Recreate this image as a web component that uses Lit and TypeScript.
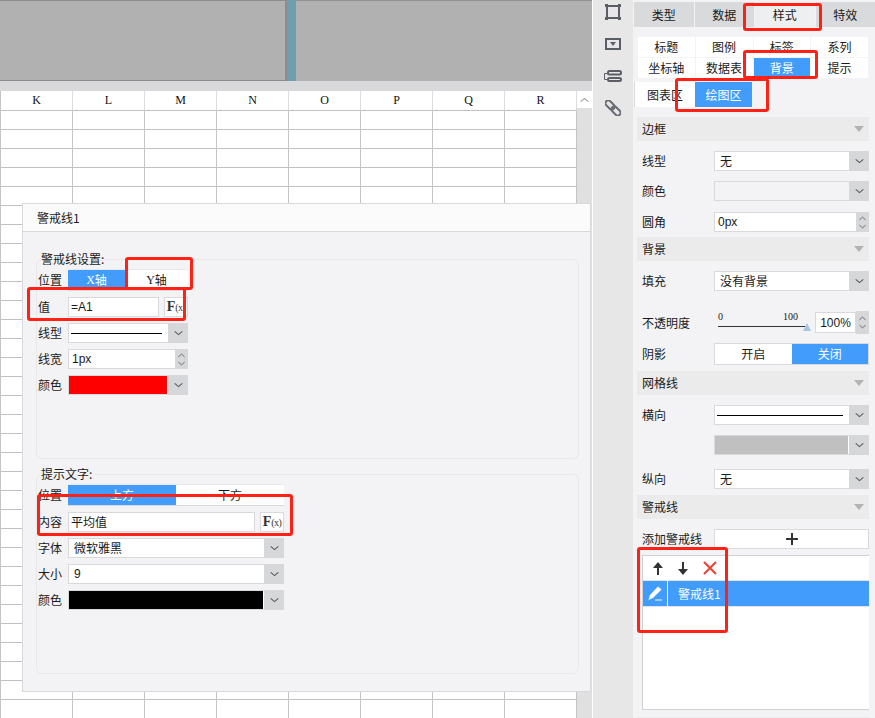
import { LitElement, html, css, svg } from "lit";
import { customElement } from "lit/decorators.js";

const chevDown = svg`<path d="M2 1 L6.5 5 L11 1" fill="none" stroke="#55585c" stroke-width="1.2"/>`;
const chevUp = svg`<path d="M2 5 L6.5 1 L11 5" fill="none" stroke="#55585c" stroke-width="1.2"/>`;
const COLS = ["K", "L", "M", "N", "O", "P", "Q", "R"];

@customElement("app-root")
export class AppRoot extends LitElement {
  static styles = css`
    :host { display: block; position: relative; width: 875px; height: 718px; overflow: hidden; background: #fff;
      font: 12px/16px "Noto Sans CJK SC", "Liberation Sans", sans-serif; color: #1a1a1a; }
    * { box-sizing: border-box; }
    .app { display: flex; height: 718px; }
    .left { position: relative; width: 592px; flex: none; display: flex; flex-direction: column; overflow: hidden; }
    .top { display: flex; height: 81px; flex: none; background: #b1b1b1; }
    .tbox1 { width: 287px; border: 1px solid #8c8c8c; border-left: 0; border-right-width: 2px; }
    .teal { width: 9px; background: #6d9fad; }
    .tbox2 { flex: 1; border-top: 1px solid #929292; }
    .band { height: 10px; flex: none; background: #d9d9db; }
    .work { display: flex; flex: 1; min-height: 0; }
    .sheet { width: 577px; flex: none; border-left: 1px solid #c4c4c4; display: grid; grid-template-columns: repeat(8, 72px); grid-auto-rows: 19px; align-content: start; overflow: hidden; }
    .ch { height: 20px; margin-bottom: -1px; display: flex; align-items: center; justify-content: center; border-right: 1px solid #dcdce0; border-bottom: 1px solid #c0c0c0; font: 400 12px "Liberation Serif", serif; color: #111; background: #fff; }
    .cell { border-right: 1px solid #c4c4c4; border-bottom: 1px solid #c0c0c0; margin-top: 1px; margin-bottom: -1px; }
    .scroll { flex: 1; display: flex; flex-direction: column; }
    .sbtn { height: 17px; flex: none; display: flex; align-items: center; justify-content: center; background: #fff; }
    .strack { flex: 1; background: #e0e0e0; }
    .dialog { position: absolute; left: 22px; top: 203px; width: 569px; height: 489px; background: #f3f3f5; border: 1px solid #d9d9db; }
    .dhead { height: 28px; padding-left: 14px; display: flex; align-items: center; background: #fbfbfb; border-bottom: 1px solid #d9d9db; }
    .dbody { padding: 27px 11px 0 13px; }
    .fs { height: 200px; padding: 0 0 0 1px; border: 1px solid #e8e8ea; border-radius: 6px; margin-bottom: 15px; }
    .legend { width: fit-content; margin: -8px 0 3px 2px; height: 14px; line-height: 14px; padding: 0 1px; background: #f3f3f5; }
    .frows { display: flex; flex-direction: column; gap: 6px; }
    .frow { display: flex; align-items: center; }
    .flabel { width: 30px; flex: none; }
    .w120 { width: 120px; }
    .w216 { width: 216px; }
    .seg { display: flex; height: 22px; border-bottom: 1px solid #d9d9db; border-top: 1px solid #e8e8ea; background: #fff; }
    .seg > span { flex: 1; display: flex; align-items: center; justify-content: center; }
    .seg > .on { background: #429cfb; color: #fff; }
    .seg > .n56 { flex: none; width: 57px; }
    .ser { font-family: "Liberation Serif", serif; }
    .box { height: 20px; display: flex; background: #fff; border: 1px solid #d9d9db; align-items: center; padding-left: 2px; }
    .val91 { width: 91px; }
    .val187 { width: 187px; }
    .fxrow { display: flex; justify-content: space-between; }
    .fx { width: 24px; height: 20px; display: flex; align-items: center; justify-content: center; background: #fff; border: 1px solid #d9d9db; font: 700 14px "Liberation Serif", serif; color: #333; }
    .fx small { font-size: 10px; font-weight: 400; letter-spacing: -.5px; }
    .sel { height: 20px; display: flex; background: #fff; border: 1px solid #d9d9db; border-right: 0; }
    .sval { flex: 1; min-width: 0; display: flex; align-items: center; padding-left: 5px; }
    .tight { padding-left: 3px; }
    .arrow { flex: none; width: 20px; margin: -1px 0; display: flex; align-items: center; justify-content: center; background: #d6d7d9; }
    .spin { flex: none; width: 13px; margin: -1px 0; display: flex; flex-direction: column; align-items: center; justify-content: center; gap: 3px; background: #d6d7d9; }
    .spin svg { width: 9px; height: 5px; }
    .arrow svg { width: 11px; height: 6px; }
    .ln { flex: 1; height: 1px; align-self: center; background: #000; margin: 0 6px 0 2px; }
    .swatch { flex: 1; align-self: stretch; margin: 0 1px 0 -5px; }
    .red { background: #f00; }
    .black { background: #000; }
    .gray { background: #c0c0c0; }
    .num { font-family: "Liberation Sans", sans-serif; }
    .rail { width: 41px; flex: none; background: #e7e7e8; border-left: 1px solid #fff; display: flex; flex-direction: column; align-items: center; padding-top: 4px; }
    .rail svg { display: block; }
    .ic2 { margin-top: 18px; }
    .ic3 { margin-top: 20px; }
    .ic4 { margin-top: 18px; }
    .panel { flex: 1; min-width: 0; background: #f3f3f5; }
    .tabs { display: grid; grid-template-columns: repeat(4, 1fr); gap: 1px; margin: 2px 0 0 1px; height: 25px; }
    .tabs span { background: #d9dadc; display: flex; align-items: center; justify-content: center; }
    .tabs .act { background: #eeeff0; }
    .sub { margin: 10px 7px 0 5px; display: grid; grid-template-columns: repeat(4, 1fr); grid-auto-rows: 20px; gap: 1px; }
    .sub span { background: #fff; display: flex; align-items: center; justify-content: center; }
    .sub .on, .sub2 .on { background: #429cfb; color: #fff; }
    .sub2 { display: flex; margin: 4px 0 0 1px; height: 25px; }
    .sub2 span { display: flex; align-items: center; justify-content: center; width: 57px; }
    .sub2 .plain { width: 61px; background: #fff; border-left: 1px solid #d9d9db; }
    .pbody { padding: 10px 6px 0 4px; }
    .hdr { height: 24px; display: flex; align-items: center; justify-content: space-between; padding: 0 5px; background: #ebebec; }
    .hdr.g5 { margin-top: 5px; }
    .hdr.g6 { margin-top: 6px; }
    .tri { width: 0; height: 0; border: 5px solid transparent; border-top: 6px solid #b3b3b5; border-bottom: 0; }
    .prow { display: flex; align-items: center; margin-top: 10px; padding-left: 5px; }
    .prow.g11 { margin-top: 11px; }
    .prow.g14 { margin-top: 14px; }
    .prow.g21 { margin-top: 21px; }
    .plabel { width: 72px; flex: none; }
    .pctl { flex: 1; min-width: 0; }
    .blank { background: #f3f3f5; }
    .slider { width: 95px; flex: none; position: relative; height: 21px; margin-left: 4px; font: 10px/10px "Liberation Serif", serif; display: flex; justify-content: space-between; padding-right: 15px; }
    .slider i { position: absolute; left: 0; right: 8px; top: 14px; height: 1px; background: #333; }
    .slider b { position: absolute; right: 2px; top: 11px; width: 0; height: 0; border: 4px solid transparent; border-bottom: 8px solid #a9c5e6; border-top: 0; }
    .pct { flex: 1; height: 21px; min-width: 0; background: #fff; border: 1px solid #d9d9db; display: flex; align-items: center; justify-content: center; font-family: "Liberation Sans", sans-serif; }
    .op { display: flex; flex: 1; height: 21px; margin-left: 2px; }
    .seg2 { display: flex; height: 22px; background: #fff; border: 1px solid #d9d9db; }
    .seg2 span { flex: 1; display: flex; align-items: center; justify-content: center; }
    .seg2 .on { background: #429cfb; color: #fff; }
    .add { height: 20px; background: #fff; border: 1px solid #d9d9db; display: flex; align-items: center; justify-content: center; }
    .list { margin: 6px 0 7px 5px; height: 155px; background: #fff; border: 1px solid #d0d0d2; border-right: 0; }
    .tools { height: 25px; border-bottom: 1px solid #e3e3e5; display: flex; align-items: center; padding-left: 7px; }
    .tools .t2 { margin-left: 9px; }
    .tools .t3 { margin-left: 12px; }
    .item { height: 26px; display: flex; background: #429cfb; color: #fff; border-bottom: 1px solid #e3e3e5; }
    .pen { width: 25px; flex: none; border-right: 1px solid #fff; display: flex; align-items: center; justify-content: center; }
    .itext { padding-left: 10px; display: flex; align-items: center; }
    .mark { position: absolute; border: 3px solid #ff2116; border-radius: 3px; pointer-events: none; }
    .m1 { left: 125px; top: 257px; width: 68px; height: 33px; }
    .m2 { left: 27px; top: 287px; width: 159px; height: 34px; }
    .m3 { left: 37px; top: 494px; width: 256px; height: 42px; }
    .m4 { left: 743px; top: 3px; width: 79px; height: 28px; }
    .m5 { left: 743px; top: 50px; width: 75px; height: 29px; }
    .m6 { left: 675px; top: 78px; width: 94px; height: 34px; }
    .m7 { left: 637px; top: 547px; width: 91px; height: 86px; }
  `;

  private chev() {
    return html`<span class="arrow"><svg viewBox="0 0 13 6">${chevDown}</svg></span>`;
  }
  private spin() {
    return html`<span class="spin"><svg viewBox="0 0 13 6">${chevUp}</svg><svg viewBox="0 0 13 6">${chevDown}</svg></span>`;
  }
  private fx() {
    return html`<span class="fx">F<small>(x)</small></span>`;
  }

  private sheet() {
    const cells = [];
    for (let i = 0; i < 32 * 8; i++) cells.push(html`<div class="cell"></div>`);
    return html`<div class="sheet">
      ${COLS.map((c) => html`<div class="ch">${c}</div>`)}
      ${cells}
    </div>`;
  }

  private dialog() {
    return html`<div class="dialog">
      <div class="dhead">警戒线1</div>
      <div class="dbody">
        <div class="fs">
          <div class="legend">警戒线设置:</div>
          <div class="frows">
            <div class="frow"><span class="flabel">位置</span>
              <div class="seg w120"><span class="on n56"><span class="ser">X</span>轴</span><span><span class="ser">Y</span>轴</span></div></div>
            <div class="frow"><span class="flabel">值</span>
              <div class="fxrow w120"><div class="box num val91">=A1</div>${this.fx()}</div></div>
            <div class="frow"><span class="flabel">线型</span>
              <div class="sel w120"><span class="ln"></span>${this.chev()}</div></div>
            <div class="frow"><span class="flabel">线宽</span>
              <div class="sel w120"><span class="sval num tight">1px</span>${this.spin()}</div></div>
            <div class="frow"><span class="flabel">颜色</span>
              <div class="sel w120"><span class="sval"><span class="swatch red"></span></span>${this.chev()}</div></div>
          </div>
        </div>
        <div class="fs">
          <div class="legend">提示文字:</div>
          <div class="frows">
            <div class="frow"><span class="flabel">位置</span>
              <div class="seg w216"><span class="on">上方</span><span>下方</span></div></div>
            <div class="frow"><span class="flabel">内容</span>
              <div class="fxrow w216"><div class="box val187">平均值</div>${this.fx()}</div></div>
            <div class="frow"><span class="flabel">字体</span>
              <div class="sel w216"><span class="sval">微软雅黑</span>${this.chev()}</div></div>
            <div class="frow"><span class="flabel">大小</span>
              <div class="sel w216"><span class="sval num">9</span>${this.chev()}</div></div>
            <div class="frow"><span class="flabel">颜色</span>
              <div class="sel w216"><span class="sval"><span class="swatch black"></span></span>${this.chev()}</div></div>
          </div>
        </div>
      </div>
    </div>`;
  }

  private rail() {
    return html`<div class="rail">
      <svg width="16" height="16" viewBox="0 0 16 16" fill="none" stroke="#5b5e65" stroke-width="2">
        <rect x="2" y="2" width="12" height="12"/>
        <path d="M0 0h3v3H0zM13 0h3v3h-3zM0 13h3v3H0zM13 13h3v3h-3z" fill="#5b5e65" stroke="none"/>
      </svg>
      <svg class="ic2" width="16" height="12" viewBox="0 0 16 12">
        <rect x="1" y="1" width="14" height="10" fill="none" stroke="#5b5e65" stroke-width="2"/>
        <path d="M5 4h6L8 8z" fill="#5b5e65"/>
      </svg>
      <svg class="ic3" width="18" height="12" viewBox="0 0 18 12" fill="none" stroke="#5b5e65">
        <path d="M3 3.5H.5v6H3" stroke-width="1"/>
        <rect x="4" y="1" width="13" height="3.5" rx="1.5" stroke-width="2"/>
        <rect x="4" y="8" width="13" height="3" rx="1.5" stroke-width="2"/>
      </svg>
      <svg class="ic4" width="16" height="16" viewBox="0 0 16 16" fill="none" stroke="#6a6d73" stroke-width="2">
        <g transform="rotate(45 8 8)">
          <rect x="-1.5" y="5.2" width="10.5" height="5.6" rx="2.8"/>
          <rect x="7" y="5.2" width="10.5" height="5.6" rx="2.8"/>
        </g>
      </svg>
    </div>`;
  }

  private panel() {
    return html`<div class="panel">
      <div class="tabs"><span>类型</span><span>数据</span><span class="act">样式</span><span>特效</span></div>
      <div class="sub">
        <span>标题</span><span>图例</span><span>标签</span><span>系列</span>
        <span>坐标轴</span><span>数据表</span><span class="on">背景</span><span>提示</span>
      </div>
      <div class="sub2"><span class="plain">图表区</span><span class="on">绘图区</span></div>
      <div class="pbody">
        <div class="hdr">边框<i class="tri"></i></div>
        <div class="prow"><span class="plabel">线型</span><div class="sel pctl"><span class="sval">无</span>${this.chev()}</div></div>
        <div class="prow"><span class="plabel">颜色</span><div class="sel pctl blank"><span class="sval"></span>${this.chev()}</div></div>
        <div class="prow g11"><span class="plabel">圆角</span><div class="sel pctl"><span class="sval num tight">0px</span>${this.spin()}</div></div>
        <div class="hdr g5">背景<i class="tri"></i></div>
        <div class="prow"><span class="plabel">填充</span><div class="sel pctl"><span class="sval">没有背景</span>${this.chev()}</div></div>
        <div class="prow g21"><span class="plabel">不透明度</span>
          <div class="slider"><span>0</span><span>100</span><i></i><b></b></div>
          <div class="op"><span class="pct">100%</span>${this.spin()}</div>
        </div>
        <div class="prow"><span class="plabel">阴影</span><div class="seg2 pctl"><span>开启</span><span class="on">关闭</span></div></div>
        <div class="hdr g6">网格线<i class="tri"></i></div>
        <div class="prow"><span class="plabel">横向</span><div class="sel pctl"><span class="ln"></span>${this.chev()}</div></div>
        <div class="prow"><span class="plabel"></span><div class="sel pctl"><span class="sval"><span class="swatch gray"></span></span>${this.chev()}</div></div>
        <div class="prow g14"><span class="plabel">纵向</span><div class="sel pctl"><span class="sval">无</span>${this.chev()}</div></div>
        <div class="hdr g6">警戒线<i class="tri"></i></div>
        <div class="prow"><span class="plabel">添加警戒线</span><div class="add pctl">
          <svg width="12" height="12" viewBox="0 0 12 12"><path d="M6 0v12M0 6h12" stroke="#333" stroke-width="2"/></svg></div></div>
        <div class="list">
          <div class="tools">
            <svg width="16" height="13" viewBox="0 0 16 13"><path d="M8 0 L13 6 H9 V13 H7 V6 H3z" fill="#333"/></svg>
            <svg class="t2" width="16" height="13" viewBox="0 0 16 13"><path d="M8 13 L13 7 H9 V0 H7 V7 H3z" fill="#333"/></svg>
            <svg class="t3" width="14" height="14" viewBox="0 0 14 14"><path d="M1 1 L13 13 M13 1 L1 13" stroke="#e8453c" stroke-width="2.2"/></svg>
          </div>
          <div class="item">
            <span class="pen"><svg width="15" height="15" viewBox="0 0 15 15">
              <path d="M10 .5 L13.5 3.5 L5 12 L.5 14 L2 9z" fill="#fff"/><path d="M7 14h7" stroke="#fff" stroke-width="1"/></svg></span>
            <span class="itext">警戒线1</span>
          </div>
        </div>
        <div class="hdr"></div>
      </div>
    </div>`;
  }

  render() {
    return html`<div class="app">
        <div class="left">
          <div class="top"><div class="tbox1"></div><div class="teal"></div><div class="tbox2"></div></div>
          <div class="band"></div>
          <div class="work">
            ${this.sheet()}
            <div class="scroll">
              <div class="sbtn"><svg width="11" height="6" viewBox="0 0 13 6"><path d="M2 5 L6.5 1 L11 5" fill="none" stroke="#9a9a9a" stroke-width="1.2"/></svg></div>
              <div class="strack"></div>
            </div>
          </div>
          ${this.dialog()}
        </div>
        ${this.rail()}
        ${this.panel()}
      </div>
      <div class="mark m1"></div><div class="mark m2"></div><div class="mark m3"></div>
      <div class="mark m4"></div><div class="mark m5"></div><div class="mark m6"></div><div class="mark m7"></div>`;
  }
}
